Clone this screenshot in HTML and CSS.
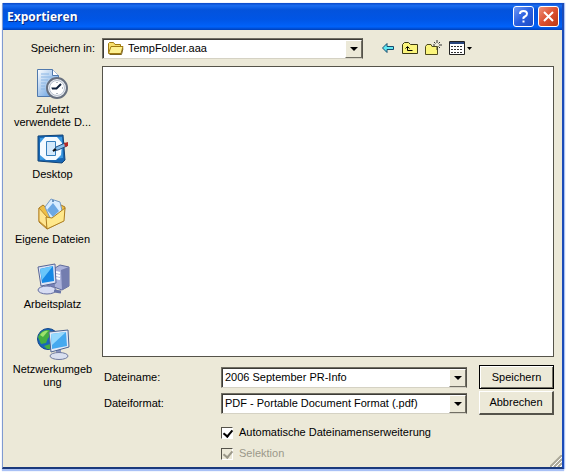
FILE: index.html
```html
<!DOCTYPE html>
<html lang="de">
<head>
  <meta charset="UTF-8">
  <meta name="viewport" content="width=device-width, initial-scale=1.0">
  <title>Exportieren</title>
  <link rel="stylesheet" href="styles.css">
</head>
<body>
  <form class="dialog">
    <header class="titlebar">
      <h1>Exportieren</h1>
      <button type="button" class="title-button help" aria-label="Hilfe">
        <svg width="19" height="19" viewBox="0 0 19 19" fill="none" stroke="#fff" stroke-width="2"><path d="M6 7V6.500Q6 4 9.500 4T13 6.800Q13 8.500 11 9.500T9.500 12M9.500 13.500v2"/></svg>
      </button>
      <button type="button" class="title-button close" aria-label="Schließen">
        <svg width="19" height="19" viewBox="0 0 19 19" stroke="#fff" stroke-width="2"><path d="M5 5l9 9M14 5l-9 9"/></svg>
      </button>
    </header>

    <div class="lookup">
      <label for="folder">Speichern in:</label>
      <div class="combo">
        <svg class="folder-icon" width="17" height="15" viewBox="0 0 17 15" stroke="#a07a10"><path d="M1.500 12V2.500l1-1h4l1.500 2h5.500V5.500" fill="#f7df6c"/><path d="M1.500 12.500L4 5.500h12l-2 7z" fill="#fdf090"/><path d="M2.500 13.500h12l1.500-6" fill="none" stroke="#7c6420"/></svg>
        <select id="folder">
          <option>TempFolder.aaa</option>
        </select>
        <span class="arrow"></span>
      </div>
      <div class="toolbar">
        <button type="button" aria-label="Zurück">
          <svg width="14" height="14" viewBox="0 0 14 14"><path d="M1.500 7L6 2.500V5.500h6.500v3H6V11.500z" fill="#5fe8f4" stroke="#174a6c"/></svg>
        </button>
        <button type="button" aria-label="Übergeordneter Ordner">
          <svg width="16" height="14" viewBox="0 0 16 14"><path d="M.5 12.500V3.500l2-2h4l2 2h7v9z" fill="#fbf57c" stroke="#3c3a14"/><path d="M5.500 6v3.500h5M3.500 7.500l2-2 2 2" fill="none" stroke="#000"/></svg>
        </button>
        <button type="button" aria-label="Neuer Ordner">
          <svg width="17" height="16" viewBox="0 0 17 16"><path d="M.5 14.500V6.500l1.500-2h4l1 2h5.500v8z" fill="#fbf57c" stroke="#4e4a1c"/><path d="M12 0v3M12 7v3M8 5h2M14 5h3M9 2l1.500 1.500M15 2l-1.500 1.500M15 8l-1.500-1.500" stroke="#333"/></svg>
        </button>
        <button type="button" aria-label="Ansicht">
          <svg width="24" height="14" viewBox="0 0 24 14"><path d="M.5.5h15v13H.5z" fill="#fff" stroke="#222"/><path d="M1 2h14" stroke="#28457c" stroke-width="2"/><path d="M2 5.500h12M2 8.500h12M2 11.500h12" stroke="#333" stroke-dasharray="2 1"/><path d="M18 6h5l-2.500 3z"/></svg>
        </button>
      </div>
    </div>

    <div class="content">
      <nav class="places">
        <a href="#recent">
          <svg width="32" height="32" viewBox="0 0 32 32">
            <defs><linearGradient id="paper" x2="1" y2="1"><stop stop-color="#fff"/><stop offset="1" stop-color="#4f92dc"/></linearGradient></defs>
            <path d="M.5 1.500h15l6 6v21H.5z" fill="url(#paper)" stroke="#5079ad"/>
            <path d="M15.500 1.500v6h6" fill="#fff" stroke="#5079ad"/>
            <path d="M4 6h8M4 9h12M4 12h7M4 15h5M4 18h4M4 21h4" stroke="#8bb6e4"/>
            <circle cx="20" cy="20" r="10" fill="#e9edf3" stroke="#67707f" stroke-width="2"/>
            <circle cx="20" cy="20" r="7.500" fill="#fff" stroke="#b7c0cd"/>
            <path d="M20 14v1M20 25v1M14 20h1M25 20h1" stroke="#678"/>
            <path d="M24 16l-4.500 4.500H15" fill="none" stroke="#10223c" stroke-width="2"/>
          </svg>
          Zuletzt<br>verwendete D...
        </a>
        <a href="#desktop">
          <svg width="32" height="32" viewBox="0 0 32 32">
            <path d="M1 3L26 2l2 25-3 3-24-2z" fill="#1767b4" stroke="#124477"/>
            <path d="M3 5l22-1 1 21-23 2z" fill="#3e9be2"/>
            <path d="M8 4h12l5 6-1 12-5 5H9l-6-5V10z" fill="#f4faff"/>
            <path d="M9.500 8.500h9v14h-9z" fill="#d4e9fb" stroke="#347dbb"/>
            <path d="M16 18l3-4 9-4 2 3-9 4z" fill="#84bce9" stroke="#244f80"/>
            <path d="M27 10l4-1v4l-3 1z" fill="#b82b25"/>
            <path d="M16 18l3-2" stroke="#111" stroke-width="2"/>
          </svg>
          Desktop
        </a>
        <a href="#documents">
          <svg width="32" height="32" viewBox="0 0 32 32">
            <path d="M2 10l4-3 6 5 12-5 4 2-2 14-16 8-8-7z" fill="#eebf47" stroke="#a97a22"/>
            <path d="M8 9l6-8 9 3 3 13-12 5z" fill="#d8ecff" stroke="#769bc5"/>
            <path d="M10 12l6-7 6 8-6 6z" fill="#6ca8e4"/>
            <circle cx="16" cy="3" r="1" fill="#4878ad"/>
            <path d="M2 10l8 9v11l-8-7z" fill="#ffe590" stroke="#bd8b2d"/>
            <path d="M9 19l6 1 13-10-1 13-17 8z" fill="#ffe88b" stroke="#ad7e22"/>
          </svg>
          Eigene Dateien
        </a>
        <a href="#computer">
          <svg width="34" height="32" viewBox="0 0 34 32">
            <path d="M19 5l5-3 9 2v19l-7 4-8-3z" fill="#abb2da" stroke="#606b9b"/>
            <path d="M25 7l8-3v19l-7 4z" fill="#737daf"/>
            <path d="M20 9l4 1M20 12l4 1M20 15l4 1" stroke="#fff" stroke-width="2"/>
            <path d="M10 20l8 1v5l-7-1z" fill="#7783bb"/>
            <ellipse cx="11" cy="27" rx="9" ry="4" fill="#d7dcf3" stroke="#626c9f"/>
            <path d="M2 4l17-3 1 19-15 3z" fill="#dce3f5" stroke="#576597"/>
            <path d="M4 6l13-3 1 15-12 2z" fill="#1688e5"/>
            <path d="M4 6l13-3-11 14z" fill="#69c6fa"/>
            <path d="M18 28l7 1" stroke="#6975a8" stroke-width="3"/>
          </svg>
          Arbeitsplatz
        </a>
        <a href="#network">
          <svg width="34" height="32" viewBox="0 0 34 32">
            <circle cx="12" cy="11" r="10.500" fill="#1865bb" stroke="#16498a"/>
            <path d="M2 9Q5 1 13 2l4 4-5 4-2 5-5 1zM8 18l6-2v5h-3z" fill="#45ae42"/>
            <path d="M4 7q4-5 8-4l-5 6z" fill="#9ee26d"/>
            <path d="M20 21l5-1v5l-5 1z" fill="#8591bf"/>
            <ellipse cx="23" cy="28" rx="9" ry="3.500" fill="#d9e0f0" stroke="#707b9f"/>
            <path d="M13 4l19-2 1 17-18 5z" fill="#e5ebf7" stroke="#4c6390"/>
            <path d="M15 6l15-2 1 14-15 3z" fill="#45a9ef"/>
            <path d="M15 6l15-2-14 13z" fill="#96d9fd"/>
          </svg>
          Netzwerkumgeb<br>ung
        </a>
      </nav>

      <div class="main">
        <div class="file-list" role="listbox" aria-label="Dateien"></div>
        <div class="fields">
          <label for="filename">Dateiname:</label>
          <div class="combo">
            <input type="text" id="filename" value="2006 September PR-Info">
            <button type="button" class="arrow" aria-label="Dateinamen anzeigen"></button>
          </div>
          <button type="submit" class="push default">Speichern</button>

          <label for="format">Dateiformat:</label>
          <div class="combo">
            <select id="format">
              <option>PDF - Portable Document Format (.pdf)</option>
            </select>
            <span class="arrow"></span>
          </div>
          <button type="button" class="push">Abbrechen</button>
        </div>
        <div class="options">
          <label><input type="checkbox" checked>Automatische Dateinamenserweiterung</label>
          <label class="disabled"><input type="checkbox" checked disabled>Selektion</label>
        </div>
      </div>
    </div>
    <svg class="grip" width="12" height="12" viewBox="0 0 12 12"><path d="M0 12L12 0M4 12l8-8M8 12l4-4" stroke="#aaa798" stroke-width="2"/><path d="M2 12L12 2M6 12l6-6M10 12l2-2" stroke="#fff"/></svg>
  </form>
</body>
</html>
```

FILE: styles.css
```css
* {
  box-sizing: border-box;
}
body {
  margin: 0;
  padding: 3px 3px 5px 2px;
  min-height: 100vh;
  display: flex;
  background-color: #fff;
  font: 11px/13px "Liberation Sans", Arial, sans-serif;
  color: #000;
}
button, input, select {
  font: inherit;
  color: inherit;
}
.dialog {
  position: relative;
  flex: 1;
  display: flex;
  flex-direction: column;
  background-color: #ece9d8;
  border: 2px solid #1c4cb8;
  border-top: none;
  border-left: 1px solid #7f9ad0;
  border-bottom-color: #1b3a7c;
  box-shadow: 0 2px 1px #a9c1f5, 1px 0 1px #a9c1f5;
}
.titlebar {
  display: flex;
  align-items: center;
  gap: 4px;
  height: 27px;
  padding: 0 3px 0 4px;
  background: linear-gradient(#0a48c8, #1a6cf0 10%, #0453dc 25%, #0055e5 60%, #0062fa 88%, #0040b8);
}
.titlebar h1 {
  flex: 1;
  margin: 0;
  font: bold 12px/16px "Open Sans", sans-serif;
  color: #fff;
  text-shadow: 1px 1px #0a2a80;
}
.title-button {
  width: 21px;
  height: 21px;
  padding: 0;
  border: 1px solid #fff;
  border-radius: 3px;
}
.title-button svg {
  display: block;
}
.help {
  background: linear-gradient(135deg, #6f98f4, #2a5fe0 50%, #1d4cc4);
}
.close {
  background: linear-gradient(135deg, #ee9078, #dc5030 50%, #b93814);
}
.lookup {
  display: flex;
  align-items: center;
  height: 36px;
}
.lookup label {
  width: 99px;
  padding-right: 7px;
  text-align: right;
}
.lookup .combo {
  flex: 0 1 261px;
}
.combo {
  position: relative;
  display: flex;
  height: 21px;
  background-color: #fff;
  border: 1px solid #716f64;
  border-right-color: #55534a;
  border-bottom-color: #d5d2c4;
  box-shadow: inset 1px 1px #3c3b36;
}
.combo select, .combo input {
  flex: 1;
  min-width: 0;
  padding: 0 20px 0 3px;
  border: none;
  outline: none;
  background: none;
  appearance: none;
}
#folder {
  padding-left: 25px;
}
.folder-icon {
  position: absolute;
  left: 4px;
  top: 2px;
}
.arrow {
  position: absolute;
  top: 1px;
  right: 0;
  bottom: 0;
  width: 17px;
  padding: 0;
  background-color: #ece9d8;
  border: 1px solid #fff;
  border-right-color: #716f64;
  border-bottom-color: #716f64;
}
span.arrow {
  pointer-events: none;
}
.arrow::after {
  content: "";
  position: absolute;
  top: 6px;
  left: 4px;
  border: 4px solid transparent;
  border-top-color: #000;
  border-bottom: none;
}
.toolbar {
  display: flex;
  align-items: center;
  gap: 7px;
  margin-left: 18px;
}
.toolbar button {
  display: flex;
  padding: 0;
  border: none;
  background: none;
}
.content {
  flex: 1;
  display: flex;
}
.places {
  width: 99px;
  padding-top: 2px;
}
.places a {
  display: flex;
  flex-direction: column;
  align-items: center;
  min-height: 65px;
  text-align: center;
  color: #000;
  text-decoration: none;
}
.places svg {
  margin-bottom: 3px;
}
.main {
  flex: 1;
  min-width: 0;
  display: flex;
  flex-direction: column;
  padding-right: 8px;
}
.file-list {
  flex: 1;
  background-color: #fff;
  border: 1px solid #55534a;
}
.fields {
  display: grid;
  grid-template-columns: 107px minmax(0, 1fr) 75px;
  gap: 2px 12px;
  align-items: center;
  padding-top: 8px;
}
.fields label {
  padding-left: 2px;
}
.push {
  height: 24px;
  padding: 0;
  background-color: #ece9d8;
  border: 1px solid #fff;
  border-right: 2px solid #55534a;
  border-bottom: 2px solid #55534a;
}
.default {
  border: 1px solid #000;
  box-shadow: inset 1px 1px #fff, inset -1px -1px #716f64;
}
.options {
  display: flex;
  flex-direction: column;
  gap: 8px;
  padding: 11px 0 7px 119px;
}
.options label {
  display: flex;
  align-items: center;
  gap: 6px;
}
.options input {
  appearance: none;
  width: 12px;
  height: 12px;
  margin: 0;
  background-color: #fff;
  border: 1px solid #fff;
  border-top-color: #55534a;
  border-left-color: #55534a;
}
.options input::after {
  content: "";
  display: block;
  width: 4px;
  height: 7px;
  margin-left: 3px;
  border: solid #000;
  border-width: 0 2px 2px 0;
  transform: rotate(40deg);
}
.options .disabled {
  color: #9b988a;
}
.options input:disabled {
  background-color: #ece9d8;
}
.options input:disabled::after {
  border-color: #9b988a;
}
.grip {
  position: absolute;
  right: 0;
  bottom: 0;
}
```
